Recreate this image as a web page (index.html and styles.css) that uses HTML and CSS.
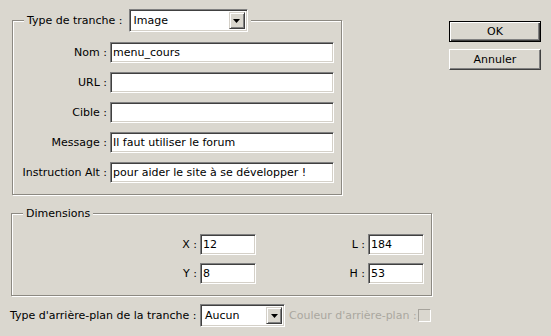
FILE: index.html
```html
<!DOCTYPE html>
<html>

<head>
    <title>Options de tranche</title>
    <link rel="stylesheet" href="styles.css">
</head>

<body>
    <div class="dialog">
        <div class="top">
            <fieldset class="group slice">
                <legend>
                    <span>Type de tranche :</span>
                    <div class="combo combo-type">
                        <span class="combo-value">Image</span>
                        <span class="combo-arrow"><svg width="7" height="4" viewBox="0 0 7 4"><polygon points="0,0 7,0 3.5,4" fill="#000"/></svg></span>
                    </div>
                </legend>

                <div class="fields">
                    <label>Nom :</label>
                    <input type="text" class="field" value="menu_cours">

                    <label>URL :</label>
                    <input type="text" class="field" value="">

                    <label>Cible :</label>
                    <input type="text" class="field" value="">

                    <label>Message :</label>
                    <input type="text" class="field" value="Il faut utiliser le forum">

                    <label>Instruction Alt :</label>
                    <input type="text" class="field" value="pour aider le site à se développer !">
                </div>
            </fieldset>

            <div class="buttons">
                <button class="btn btn-default">OK</button>
                <button class="btn">Annuler</button>
            </div>
        </div>

        <fieldset class="group dims">
            <legend>Dimensions</legend>
            <div class="dim-grid">
                <label>X :</label>
                <input type="text" class="field" value="12">
                <label>L :</label>
                <input type="text" class="field" value="184">

                <label>Y :</label>
                <input type="text" class="field" value="8">
                <label>H :</label>
                <input type="text" class="field" value="53">
            </div>
        </fieldset>

        <div class="bottom">
            <span class="bottom-label">Type d'arrière-plan de la tranche :</span>
            <div class="combo combo-bg">
                <span class="combo-value">Aucun</span>
                <span class="combo-arrow"><svg width="7" height="4" viewBox="0 0 7 4"><polygon points="0,0 7,0 3.5,4" fill="#000"/></svg></span>
            </div>
            <span class="disabled-label">Couleur d'arrière-plan :</span>
            <span class="check"></span>
        </div>
    </div>
</body>
</html>
```

FILE: styles.css
```css
body {
    margin: 0;
    background: #dad7cf;
    font-family: "DejaVu Sans", "Liberation Sans", sans-serif;
    font-size: 11px;
    color: #000;
}

.dialog {
    box-sizing: border-box;
    width: 551px;
    height: 336px;
    padding: 9px 10px 0 11px;
}

.top {
    display: flex;
    align-items: flex-start;
}

/* etched group box */
.group {
    margin: 0;
    border: 1px solid #8c8982;
    box-shadow: inset 1px 1px #fff, 1px 1px #fff;
    min-width: 0;
}

.group legend {
    background: #dad7cf;
    padding: 0 3px;
}

.slice {
    box-sizing: border-box;
    width: 330px;
    margin-left: 1px;
    padding: 10px 7px 11px 0;
}

.slice legend {
    display: flex;
    align-items: center;
    gap: 6px;
    margin-left: 11px;
}

.fields {
    display: grid;
    grid-template-columns: 94px 224px;
    column-gap: 3px;
    row-gap: 9px;
    align-items: center;
}

.fields label,
.dim-grid label {
    text-align: right;
    white-space: nowrap;
}

.field {
    box-sizing: border-box;
    height: 21px;
    margin: 0;
    padding: 0 2px;
    font: inherit;
    color: #000;
    background: #fff;
    border: 1px solid;
    border-color: #808080 #fff #fff #808080;
    box-shadow: inset 1px 1px #404040, inset -1px -1px #d4d0c8;
    outline: none;
}

.buttons {
    display: flex;
    flex-direction: column;
    gap: 7px;
    width: 92px;
    margin-left: auto;
    margin-top: 12px;
}

.btn {
    box-sizing: border-box;
    height: 21px;
    padding: 0;
    font: inherit;
    color: #000;
    background: #dad7cf;
    border: 1px solid;
    border-color: #fff #404040 #404040 #fff;
    box-shadow: inset -1px -1px #808080;
}

.btn-default {
    border: 1px solid #000;
    box-shadow: inset 1px 1px #fff, inset -1px -1px #404040, inset -2px -2px #808080;
}

.dims {
    box-sizing: border-box;
    width: 421px;
    margin-top: 12px;
    padding: 14px 7px 11px 0;
}

.dims legend {
    margin-left: 11px;
}

.dim-grid {
    display: grid;
    grid-template-columns: 185px 56px 106px 56px;
    column-gap: 3px;
    row-gap: 8px;
    align-items: center;
}

/* combo box */
.combo {
    box-sizing: border-box;
    display: flex;
    align-items: center;
    height: 23px;
    padding: 2px;
    background: #fff;
    border: 1px solid;
    border-color: #808080 #fff #fff #808080;
    box-shadow: inset 1px 1px #404040, inset -1px -1px #d4d0c8;
}

.combo-type {
    width: 119px;
}

.combo-bg {
    width: 85px;
}

.combo-value {
    flex: 1;
    padding-left: 2px;
}

.combo-arrow {
    box-sizing: border-box;
    display: flex;
    align-items: center;
    justify-content: center;
    width: 16px;
    height: 17px;
    background: #dad7cf;
    border: 1px solid;
    border-color: #d4d0c8 #404040 #404040 #d4d0c8;
    box-shadow: inset 1px 1px #fff, inset -1px -1px #808080;
}

.bottom {
    display: flex;
    align-items: center;
    margin-top: 8px;
    margin-left: -1px;
}

.bottom-label {
    width: 190px;
    white-space: nowrap;
}

.disabled-label {
    margin-left: 4px;
    color: #aaa79f;
    white-space: nowrap;
}

.check {
    box-sizing: border-box;
    width: 13px;
    height: 13px;
    margin-left: 1px;
    border: 1px solid;
    border-color: #a6a39c #fff #fff #a6a39c;
}
```
